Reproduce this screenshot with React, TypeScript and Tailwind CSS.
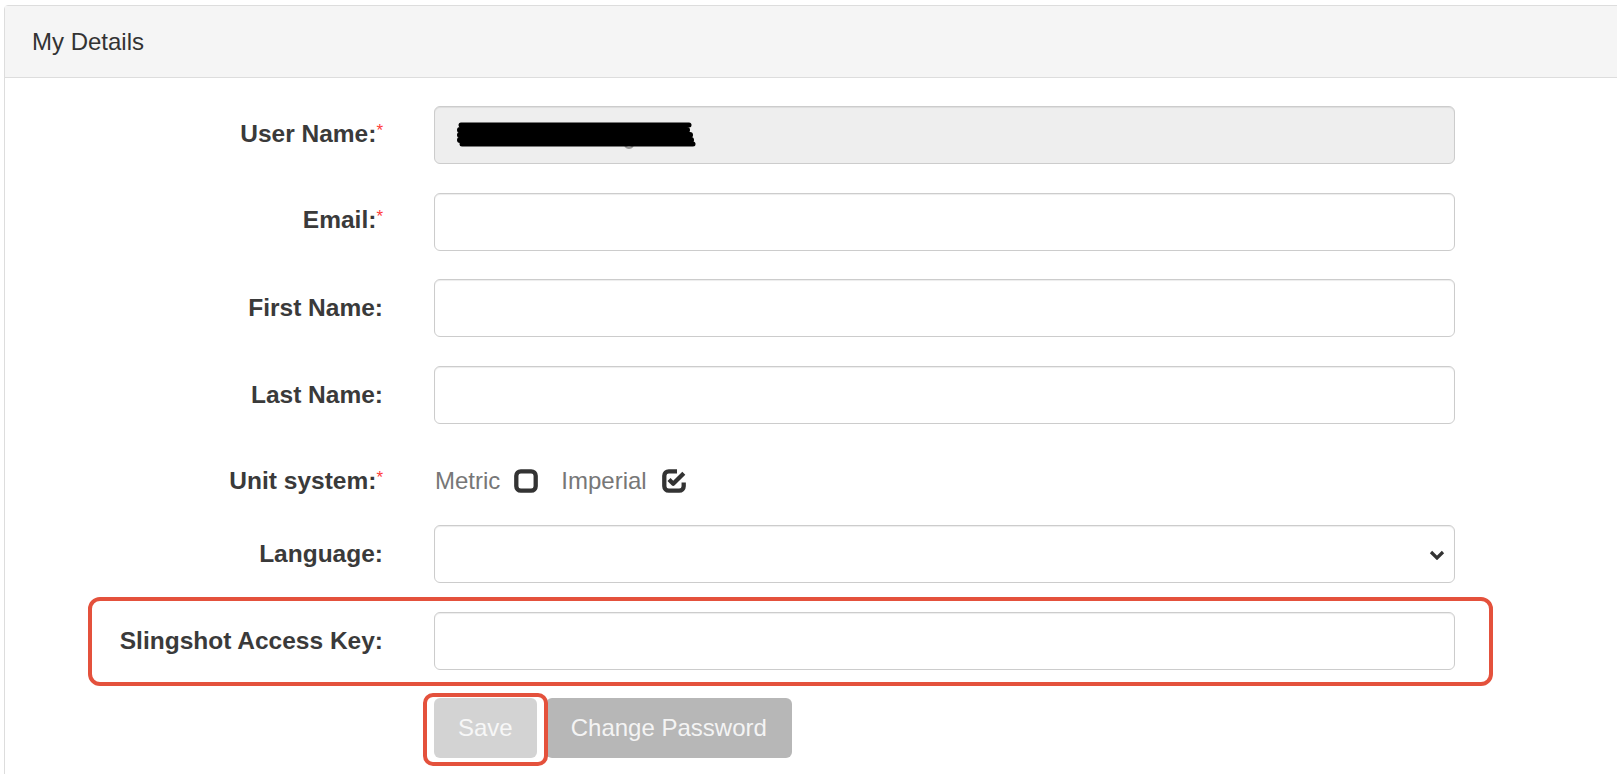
import type { ReactNode } from 'react';

const font = { fontFamily: '"Liberation Sans", Arial, sans-serif' };

function Label({ text, required }: { text: string; required?: boolean }) {
  return (
    <div className="w-[378px] shrink-0 text-right text-[24.5px] font-bold text-[#3a3a3a] leading-[28px]">
      {text}
      {required && <span className="relative -top-[6px] text-[17px] font-normal text-[#ff3b3b]">*</span>}
    </div>
  );
}

function Row({ label, required, children }: { label: string; required?: boolean; children: ReactNode }) {
  return (
    <div className="flex items-center">
      <Label text={label} required={required} />
      <div className="ml-[51px] w-[1021px]">{children}</div>
    </div>
  );
}

function TextBox({ disabled, children }: { disabled?: boolean; children?: ReactNode }) {
  return (
    <div
      className={`relative h-[58px] rounded-[6px] border border-[#ccc] shadow-[inset_0_1px_1px_rgba(0,0,0,0.075)] ${disabled ? 'bg-[#eee]' : 'bg-white'}`}
    >
      {children}
    </div>
  );
}

function SquareIcon() {
  return (
    <svg width="24" height="24" viewBox="0 0 24 24" className="ml-[14px]">
      <rect x="2.3" y="2.3" width="19.4" height="19.4" rx="4.5" fill="none" stroke="#333" strokeWidth="4.3" />
    </svg>
  );
}

function CheckSquareIcon() {
  return (
    <svg width="24" height="24" viewBox="0 0 24 24" className="ml-[15px]">
      <path
        d="M15 2.3H6.8A4.5 4.5 0 0 0 2.3 6.8V17.2A4.5 4.5 0 0 0 6.8 21.7H17.2A4.5 4.5 0 0 0 21.7 17.2V13.5"
        fill="none"
        stroke="#333"
        strokeWidth="4.3"
      />
      <path d="M7 10.5L11.2 14.7L21.8 4.2" fill="none" stroke="#333" strokeWidth="4.3" strokeLinejoin="round" />
    </svg>
  );
}

function Redaction() {
  return (
    <svg width="240" height="30" viewBox="0 0 240 30" className="absolute left-[22px] top-[14px]">
      <path d="M168 25 q4 4 8 0" fill="none" stroke="#999" strokeWidth="2" />
      <g stroke="#000" strokeLinecap="round" fill="none">
        <path d="M4 4 L232 4" strokeWidth="5" />
        <path d="M3 9 L230 9" strokeWidth="6" />
        <path d="M3 14 L233 14" strokeWidth="6" />
        <path d="M3 19 L234 19" strokeWidth="6" />
        <path d="M5 23 L236 23" strokeWidth="5" />
      </g>
    </svg>
  );
}

export default function App() {
  return (
    <div className="relative h-[774px] w-full overflow-hidden bg-white" style={font}>
      <div className="ml-[4px] mt-[5px] w-[1640px] rounded-tl-[4px] border border-[#ddd]">
        <div className="flex h-[72px] items-center border-b border-[#ddd] bg-[#f5f5f5] pl-[27px] text-[24px] text-[#333]">
          My Details
        </div>
        <div className="flex flex-col gap-[28.6px] pt-[28px] pb-[20px]">
          <Row label="User Name:" required>
            <TextBox disabled>
              <Redaction />
            </TextBox>
          </Row>
          <Row label="Email:" required>
            <TextBox />
          </Row>
          <Row label="First Name:">
            <TextBox />
          </Row>
          <Row label="Last Name:">
            <TextBox />
          </Row>
          <div className="flex h-[44px] items-start pt-[15px]">
            <Label text="Unit system:" required />
            <div className="ml-[52px] flex items-center text-[24px] leading-[27px] text-[#777]">
              <span>Metric</span>
              <SquareIcon />
              <span className="ml-[23px]">Imperial</span>
              <CheckSquareIcon />
            </div>
          </div>
          <Row label="Language:">
            <TextBox>
              <svg width="16" height="10" viewBox="0 0 16 10" className="absolute right-[9px] top-[24px]">
                <path d="M2 2L8 8L14 2" fill="none" stroke="#333" strokeWidth="3.2" />
              </svg>
            </TextBox>
          </Row>
          <Row label="Slingshot Access Key:">
            <TextBox />
          </Row>
          <div className="flex">
            <div className="ml-[429px] flex gap-[9px]">
              <button className="h-[60px] rounded-[6px] bg-[#d3d3d3] px-[24px] text-[24px] text-[#f7f7f7]">Save</button>
              <button className="h-[60px] rounded-[6px] bg-[#b7b7b7] px-[25px] text-[24px] text-[#f4f4f4]">
                Change Password
              </button>
            </div>
          </div>
        </div>
      </div>

      {/* red annotation boxes */}
      <div className="absolute left-[88px] top-[597px] h-[89px] w-[1405px] rounded-[12px] border-4 border-[#e4513c]" />
      <div className="absolute left-[423px] top-[693px] h-[73px] w-[125px] rounded-[10px] border-4 border-[#e4513c]" />
    </div>
  );
}
